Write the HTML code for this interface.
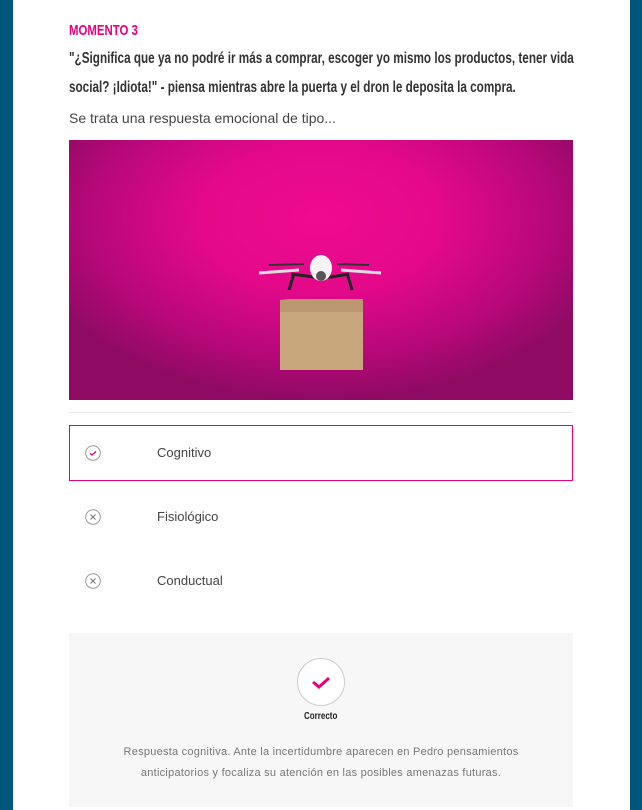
<!DOCTYPE html>
<html><head><meta charset="utf-8"><style>
*{margin:0;padding:0;box-sizing:border-box}
body{width:642px;height:810px;background:#00557a;overflow:hidden;font-family:"Liberation Sans",sans-serif}
.panel{position:absolute;left:13px;top:0;width:617px;height:810px;background:#fff}
.abs{position:absolute}
.h{font-family:"Liberation Sans",sans-serif;font-weight:bold;color:#333;white-space:nowrap;transform-origin:0 0}
.img{left:69px;top:140px;width:504px;height:260px;background:radial-gradient(ellipse 60% 70% at 50% 30%,#ee0b8f 0%,#e4098a 40%,#b8087a 75%,#8e0a63 100%)}
.opt{left:69px;width:504px;height:56px;font-size:13px;color:#444}
.opt span{position:absolute;left:88px;top:19px}
.ic{position:absolute;left:16px;top:20px;width:16px;height:16px}
</style></head><body>
<div class="panel"></div>
<div class="abs h" style="left:69px;top:22px;font-size:15px;color:#e6007e;transform:scaleX(0.76)">MOMENTO 3</div>
<div class="abs h" style="left:69px;top:50px;font-size:16px;transform:scaleX(0.733)">"¿Significa que ya no podré ir más a comprar, escoger yo mismo los productos, tener vida</div>
<div class="abs h" style="left:69px;top:79px;font-size:16px;transform:scaleX(0.733)">social? ¡Idiota!" - piensa mientras abre la puerta y el dron le deposita la compra.</div>
<div class="abs" style="left:69px;top:110px;font-size:14px;color:#444">Se trata una respuesta emocional de tipo...</div>
<div class="abs img">
<svg width="504" height="260" viewBox="0 0 504 260" style="position:absolute;left:0;top:0">
<polygon points="211,160 220,159 294,159 290,170 211,170" fill="#b8956a"/>
<rect x="211" y="165" width="83" height="65" fill="#c9a77c"/>
<rect x="211" y="160" width="83" height="12" fill="#bb9870"/>
<line x1="190" y1="133" x2="230" y2="130" stroke="#ddd" stroke-width="3"/>
<line x1="272" y1="130" x2="312" y2="133" stroke="#ddd" stroke-width="3"/>
<line x1="200" y1="125" x2="235" y2="124" stroke="#333" stroke-width="2"/>
<line x1="268" y1="124" x2="300" y2="125" stroke="#333" stroke-width="2"/>
<path d="M222 134 L245 137 L262 137 L280 134" stroke="#222" stroke-width="3" fill="none"/>
<path d="M225 133 L220 150 M278 133 L283 150" stroke="#222" stroke-width="3"/>
<ellipse cx="252" cy="128" rx="11" ry="13" fill="#f4f4f4"/>
<circle cx="252" cy="136" r="5" fill="#555"/>
</svg></div>
<div class="abs" style="left:69px;top:412px;width:504px;height:1px;background:#e6e6e6"></div>
<div class="abs opt" style="top:425px;height:56px;border:1px solid #e6007e">
<svg class="ic" style="left:15px;top:19px" viewBox="0 0 16 16"><circle cx="8" cy="8" r="7.3" fill="none" stroke="#999"/><path d="M5 8.3l2 1.7 4-3.5" stroke="#e6007e" stroke-width="1.4" fill="none"/></svg>
<span style="left:87px;top:19px">Cognitivo</span></div>
<div class="abs opt" style="top:489px"><svg class="ic" viewBox="0 0 16 16"><circle cx="8" cy="8" r="7.3" fill="none" stroke="#999"/><path d="M5.5 5.5l5 5M10.5 5.5l-5 5" stroke="#777" stroke-width="1.1"/></svg><span style="top:20px">Fisiológico</span></div>
<div class="abs opt" style="top:553px"><svg class="ic" viewBox="0 0 16 16"><circle cx="8" cy="8" r="7.3" fill="none" stroke="#999"/><path d="M5.5 5.5l5 5M10.5 5.5l-5 5" stroke="#777" stroke-width="1.1"/></svg><span style="top:20px">Conductual</span></div>
<div class="abs" style="left:69px;top:633px;width:504px;height:174px;background:#f7f7f7">
<svg style="position:absolute;left:227px;top:24px" width="50" height="50" viewBox="0 0 50 50"><circle cx="25" cy="25" r="23.5" fill="#fff" stroke="#ccc"/><path d="M17 25l6 5 10-9" stroke="#e6007e" stroke-width="3" fill="none"/></svg>
<div class="h" style="position:absolute;left:235px;top:78px;font-size:10px;color:#222;transform:scaleX(0.8)">Correcto</div>
<div style="position:absolute;left:0;width:504px;top:109px;text-align:center;font-size:11px;letter-spacing:0.25px;line-height:21px;color:#777">Respuesta cognitiva. Ante la incertidumbre aparecen en Pedro pensamientos<br>anticipatorios y focaliza su atención en las posibles amenazas futuras.</div>
</div>
</body></html>
